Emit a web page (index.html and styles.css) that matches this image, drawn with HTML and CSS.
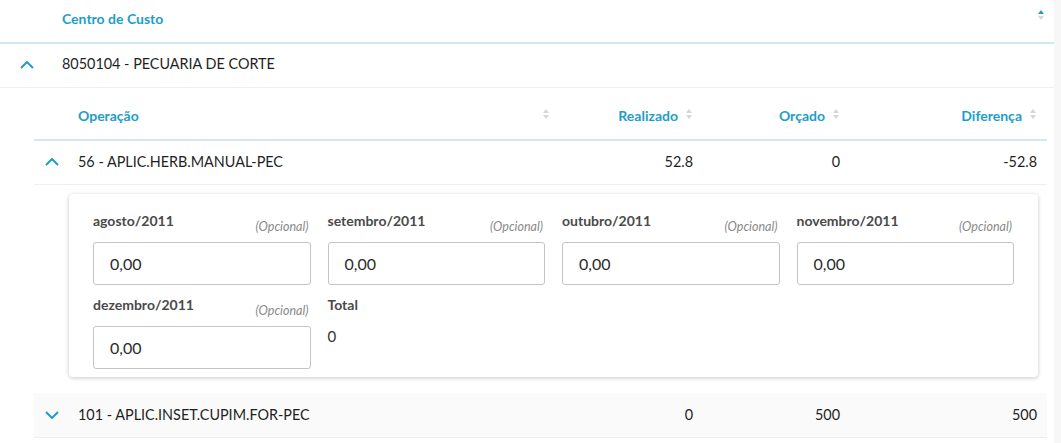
FILE: index.html
```html
<!DOCTYPE html>
<html lang="pt">
<head>
<meta charset="utf-8">
<title>Centro de Custo</title>
<link rel="stylesheet" href="styles.css">
</head>
<body>
<div class="page">
  <div class="main">
    <div class="outer-head">
      <span class="th-text">Centro de Custo</span>
      <svg class="sort sort-active" viewBox="0 0 6 12" width="6" height="12"><polygon points="0,5 3,1 6,5" class="up"/><polygon points="0,7 3,11 6,7" class="down"/></svg>
    </div>
    <div class="outer-row">
      <span class="toggle-outer"><svg class="chev" viewBox="0 0 14 8" width="14" height="8"><polyline points="1,7 7,1 13,7"/></svg></span>
      <span class="cell-text">8050104 - PECUARIA DE CORTE</span>
    </div>

    <div class="nested">
      <div class="grid head">
        <div class="c"></div>
        <div class="c th-left"><span class="th-text">Operação</span><svg class="sort" viewBox="0 0 6 12" width="6" height="12"><polygon points="0,5 3,1 6,5" class="down"/><polygon points="0,7 3,11 6,7" class="down"/></svg></div>
        <div class="c num"><span class="th-text">Realizado</span><svg class="sort" viewBox="0 0 6 12" width="6" height="12"><polygon points="0,5 3,1 6,5" class="down"/><polygon points="0,7 3,11 6,7" class="down"/></svg></div>
        <div class="c num"><span class="th-text">Orçado</span><svg class="sort" viewBox="0 0 6 12" width="6" height="12"><polygon points="0,5 3,1 6,5" class="down"/><polygon points="0,7 3,11 6,7" class="down"/></svg></div>
        <div class="c num"><span class="th-text">Diferença</span><svg class="sort" viewBox="0 0 6 12" width="6" height="12"><polygon points="0,5 3,1 6,5" class="down"/><polygon points="0,7 3,11 6,7" class="down"/></svg></div>
      </div>

      <div class="grid row">
        <div class="c toggle"><svg class="chev" viewBox="0 0 14 8" width="14" height="8"><polyline points="1,7 7,1 13,7"/></svg></div>
        <div class="c">56 - APLIC.HERB.MANUAL-PEC</div>
        <div class="c num">52.8</div>
        <div class="c num">0</div>
        <div class="c num">-52.8</div>
      </div>

      <div class="detail">
        <div class="card">
          <div class="field">
            <div class="label-row"><span class="label">agosto/2011</span><span class="opt">(Opcional)</span></div>
            <div class="input">0,00</div>
          </div>
          <div class="field">
            <div class="label-row"><span class="label">setembro/2011</span><span class="opt">(Opcional)</span></div>
            <div class="input">0,00</div>
          </div>
          <div class="field">
            <div class="label-row"><span class="label">outubro/2011</span><span class="opt">(Opcional)</span></div>
            <div class="input">0,00</div>
          </div>
          <div class="field">
            <div class="label-row"><span class="label">novembro/2011</span><span class="opt">(Opcional)</span></div>
            <div class="input">0,00</div>
          </div>
          <div class="field">
            <div class="label-row"><span class="label">dezembro/2011</span><span class="opt">(Opcional)</span></div>
            <div class="input">0,00</div>
          </div>
          <div class="field">
            <div class="label-row"><span class="label">Total</span></div>
            <div class="total-val">0</div>
          </div>
        </div>
      </div>

      <div class="grid row alt">
        <div class="c toggle"><svg class="chev" viewBox="0 0 14 8" width="14" height="8"><polyline points="1,1 7,7 13,1"/></svg></div>
        <div class="c">101 - APLIC.INSET.CUPIM.FOR-PEC</div>
        <div class="c num">0</div>
        <div class="c num">500</div>
        <div class="c num">500</div>
      </div>
    </div>
  </div>
  <div class="scrollbar"></div>
</div>
</body>
</html>
```

FILE: styles.css
```css
* { box-sizing: border-box; }
html, body { margin: 0; padding: 0; background: #ffffff; }
body {
  font-family: "Lato", "Open Sans", sans-serif;
  font-size: 14.4px;
  color: #1f1f1f;
}
.page { display: flex; width: 1061px; height: 443px; overflow: hidden; }
.main { flex: 1; min-width: 0; }
.scrollbar { width: 7px; background: #f7f7f7; }

.th-text { color: #1e9dca; font-weight: 700; font-size: 14px; }

.outer-head {
  height: 44px;
  display: flex;
  align-items: center;
  justify-content: space-between;
  padding: 0 10px 6px 62px;
  border-bottom: 2px solid #cfe9f1;
}
.sort { display: block; }
.sort .up { fill: #1e9dca; }
.sort .down { fill: #d6d6d6; }
.sort-active { margin-top: -6px; }

.outer-row {
  height: 44px;
  display: flex;
  align-items: center;
  padding-bottom: 4px;
  border-bottom: 1px solid #eeeeee;
}
.toggle-outer { width: 62px; padding-left: 20px; display: flex; align-items: center; padding-top: 2px; }
.chev { display: block; }
.chev polyline { fill: none; stroke: #1e9dca; stroke-width: 2; }

.nested { margin: 0 0 0 34px; padding-top: 8px; padding-right: 7px; }

.grid {
  display: grid;
  grid-template-columns: 36px 1fr 146px 147px 197px;
  align-items: center;
}
.grid .c { padding: 0 10px 0 8px; white-space: nowrap; }
.grid .c:first-child { padding: 0; }
.grid .num { text-align: right; display: flex; justify-content: flex-end; align-items: center; }
.head { height: 45px; border-bottom: 2px solid #cfe9f1; padding-bottom: 4px; }
.head .th-left { display: flex; justify-content: space-between; align-items: center; padding-right: 8px; }
.head .sort { margin-left: 8px; margin-top: -4px; }
.head .num { padding-right: 11px; }
.row { height: 44px; border-bottom: 1px solid #eeeeee; padding-bottom: 2px; }
.row.alt { background: #fafafa; height: 45px; padding-bottom: 1px; }
.toggle { padding-left: 11px !important; display: flex; align-items: center; padding-top: 2px; }

.detail { padding: 9px 9px 16px 35px; }
.card {
  background: #fff;
  border-radius: 4px;
  box-shadow: 0 1px 4px rgba(0,0,0,0.22);
  padding: 17px 24px 8px 24px;
  display: grid;
  grid-template-columns: repeat(4, 1fr);
  column-gap: 17px;
  row-gap: 10px;
}
.label-row {
  height: 20px;
  display: flex;
  justify-content: space-between;
  align-items: flex-end;
  padding-right: 2px;
}
.label { font-weight: 700; color: #4a4a4a; font-size: 14px; line-height: 20px; align-self: flex-start; }
.opt { font-style: italic; font-size: 12.5px; color: #8a8a8a; line-height: 14px; margin-bottom: -3px; }
.input {
  margin-top: 11px;
  height: 43px;
  border: 1px solid #c4c4c4;
  border-radius: 3px;
  padding-left: 16px;
  display: flex;
  align-items: center;
  font-size: 16px;
  color: #2b2b2b;
}
.total-val { margin-top: 12px; font-size: 15px; color: #333; }
```
